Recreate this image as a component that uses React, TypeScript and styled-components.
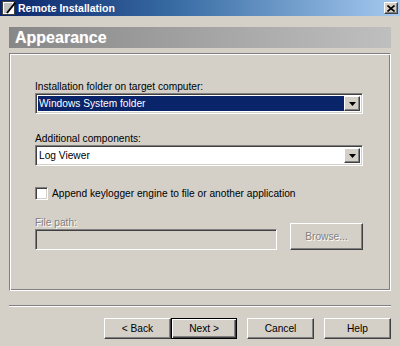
import React from 'react'
import styled, { createGlobalStyle, css } from 'styled-components'

const GlobalStyle = createGlobalStyle`
  html, body {
    margin: 0;
    padding: 0;
    background: #d4d0c8;
  }
  * {
    box-sizing: border-box;
  }
`

const FACE = '#d4d0c8'
const FONT = `'Liberation Sans', Arial, sans-serif`

const raised = css`
  border-top: 1px solid #ffffff;
  border-left: 1px solid #ffffff;
  border-right: 1px solid #404040;
  border-bottom: 1px solid #404040;
  box-shadow: inset -1px -1px 0 #808080;
`

const sunken = css`
  border-top: 1px solid #808080;
  border-left: 1px solid #808080;
  border-right: 1px solid #ffffff;
  border-bottom: 1px solid #ffffff;
  box-shadow: inset 1px 1px 0 #404040, inset -1px -1px 0 ${FACE};
`

const Window = styled.div`
  width: 400px;
  height: 346px;
  background: ${FACE};
  font-family: ${FONT};
  font-size: 10.2px;
  color: #000;
  overflow: hidden;
`

const TitleBar = styled.div`
  height: 16px;
  display: flex;
  align-items: center;
  padding: 0 2px 0 2px;
  background: linear-gradient(to right, #0a246a 0%, #3a6ea5 45%, #a6caf0 100%);
`

const TitleText = styled.span`
  margin-left: 2px;
  color: #fff;
  font-weight: bold;
  font-size: 10.5px;
`

const CloseButton = styled.div`
  margin-left: auto;
  width: 14px;
  height: 12px;
  background: ${FACE};
  ${raised};
  display: flex;
  align-items: center;
  justify-content: center;
`

const Body = styled.div`
  padding: 11px 9px 0 9px;
`

const HeaderBar = styled.div`
  height: 21px;
  display: flex;
  align-items: center;
  padding-left: 6px;
  background: linear-gradient(to right, #878787 0%, #a3a3a3 50%, #bfbfbf 100%);
  color: #fff;
  font-size: 16px;
  font-weight: bold;
  text-shadow: 0 0 1px rgba(255, 255, 255, 0.4);
`

const Panel = styled.div`
  margin-top: 5px;
  height: 238px;
  border-top: 1px solid #808080;
  border-left: 1px solid #808080;
  border-right: 1px solid #ffffff;
  border-bottom: 1px solid #ffffff;
  box-shadow: inset 1px 1px 0 #ffffff, inset -1px -1px 0 #808080;
  padding: 26px 27px 0 25px;
  display: flex;
  flex-direction: column;
`

const Label = styled.div<{ $disabled?: boolean; $gap?: number }>`
  height: 13px;
  line-height: 13px;
  margin-top: ${({ $gap }) => $gap ?? 0}px;
  white-space: nowrap;
  ${({ $disabled }) =>
    $disabled &&
    css`
      color: #808080;
      text-shadow: 1px 1px 0 #ffffff;
    `}
`

const Combo = styled.div`
  height: 21px;
  width: 328px;
  display: flex;
  align-items: stretch;
  padding: 2px;
  background: #fff;
  ${sunken};
`

const ComboValue = styled.div<{ $selected?: boolean }>`
  flex: 1;
  display: flex;
  align-items: center;
  padding-left: 1px;
  white-space: nowrap;
  ${({ $selected }) =>
    $selected
      ? css`
          background: #0a246a;
          color: #fff;
        `
      : css`
          background: #fff;
          color: #000;
        `}
`

const ComboArrow = styled.div`
  width: 16px;
  background: ${FACE};
  ${raised};
  display: flex;
  align-items: center;
  justify-content: center;
`

const CheckRow = styled.label`
  margin-top: 21px;
  display: flex;
  align-items: center;
  height: 13px;
  gap: 4px;
  white-space: nowrap;
`

const CheckBox = styled.span`
  width: 13px;
  height: 13px;
  background: #fff;
  ${sunken};
`

const FileRow = styled.div`
  display: flex;
  align-items: flex-end;
  gap: 13px;
`

const FileColumn = styled.div`
  display: flex;
  flex-direction: column;
`

const TextField = styled.div`
  width: 242px;
  height: 21px;
  background: ${FACE};
  ${sunken};
`

const Button = styled.div<{ $default?: boolean; $disabled?: boolean; $width?: number; $height?: number }>`
  width: ${({ $width }) => $width ?? 67}px;
  height: ${({ $height }) => $height ?? 21}px;
  display: flex;
  align-items: center;
  justify-content: center;
  background: ${FACE};
  ${raised};
  ${({ $default }) =>
    $default &&
    css`
      border: 1px solid #000;
      box-shadow: inset 1px 1px 0 #fff, inset -1px -1px 0 #404040, inset -2px -2px 0 #808080;
    `}
  ${({ $disabled }) =>
    $disabled &&
    css`
      color: #808080;
      text-shadow: 1px 1px 0 #ffffff;
    `}
`

const Separator = styled.div`
  margin-top: 14px;
  height: 2px;
  border-top: 1px solid #808080;
  border-bottom: 1px solid #ffffff;
`

const ButtonRow = styled.div`
  margin-top: 11px;
  display: flex;
  justify-content: flex-end;
`

const ButtonGap = styled.div<{ $w: number }>`
  width: ${({ $w }) => $w}px;
`

const AppIcon = () => (
  <svg width="14" height="14" viewBox="0 0 14 14">
    <rect x="0.5" y="0.5" width="12" height="13" fill="#fff" stroke="#404040" />
    <path d="M2 3h8M2 5h8M2 7h6M2 9h5M2 11h4" stroke="#808080" strokeWidth="1" />
    <path d="M5 12 L12.5 2.5" stroke="#000" strokeWidth="2" />
    <path d="M12 1.5 L13.5 3" stroke="#000" strokeWidth="1.2" />
  </svg>
)

const CloseGlyph = () => (
  <svg width="8" height="7" viewBox="0 0 8 7">
    <path d="M0.5 0.5 L7.5 6.5 M7.5 0.5 L0.5 6.5" stroke="#000" strokeWidth="1.6" />
  </svg>
)

const DownArrow = () => (
  <svg width="7" height="4" viewBox="0 0 7 4">
    <path d="M0 0h7L3.5 4z" fill="#000" />
  </svg>
)

export default function App() {
  return (
    <>
      <GlobalStyle />
      <Window>
        <TitleBar>
          <AppIcon />
          <TitleText>Remote Installation</TitleText>
          <CloseButton>
            <CloseGlyph />
          </CloseButton>
        </TitleBar>
        <Body>
          <HeaderBar>Appearance</HeaderBar>
          <Panel>
            <Label>Installation folder on target computer:</Label>
            <Combo>
              <ComboValue $selected>Windows System folder</ComboValue>
              <ComboArrow>
                <DownArrow />
              </ComboArrow>
            </Combo>
            <Label $gap={18}>Additional components:</Label>
            <Combo>
              <ComboValue>Log Viewer</ComboValue>
              <ComboArrow>
                <DownArrow />
              </ComboArrow>
            </Combo>
            <CheckRow>
              <CheckBox />
              Append keylogger engine to file or another application
            </CheckRow>
            <FileRow>
              <FileColumn>
                <Label $disabled $gap={16}>
                  File path:
                </Label>
                <TextField />
              </FileColumn>
              <Button $disabled $width={74} $height={27}>
                Browse...
              </Button>
            </FileRow>
          </Panel>
          <Separator />
          <ButtonRow>
            <Button>&lt; Back</Button>
            <Button $default $width={66}>
              Next &gt;
            </Button>
            <ButtonGap $w={10} />
            <Button>Cancel</Button>
            <ButtonGap $w={10} />
            <Button>Help</Button>
          </ButtonRow>
        </Body>
      </Window>
    </>
  )
}
